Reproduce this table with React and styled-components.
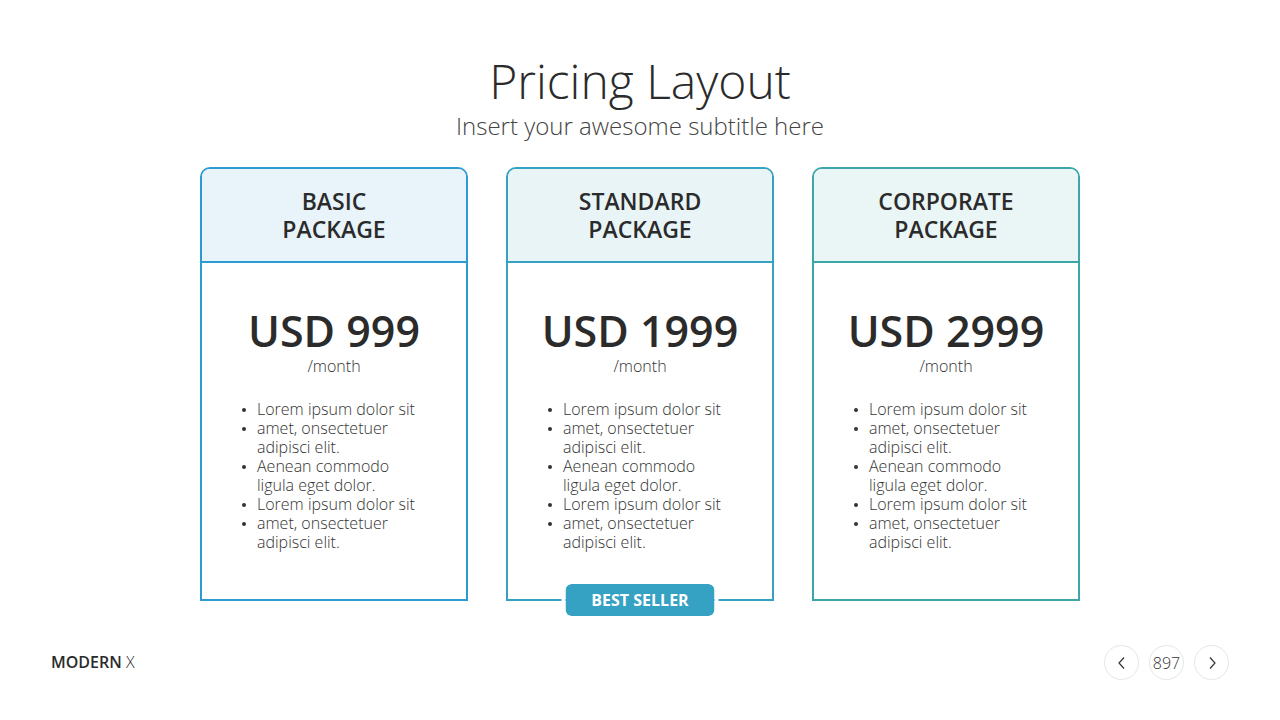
import React from "react";
import styled, { createGlobalStyle } from "styled-components";

const GlobalStyle = createGlobalStyle`
  html, body {
    margin: 0;
    padding: 0;
    background: #ffffff;
  }
  body {
    font-family: "Open Sans", "Liberation Sans", sans-serif;
    color: #2b2b2b;
  }
`;

const plans = [
  {
    name: ["BASIC", "PACKAGE"],
    price: "USD 999",
    color: "#2d9bd3",
    tint: "#e8f4fa",
  },
  {
    name: ["STANDARD", "PACKAGE"],
    price: "USD 1999",
    color: "#35a1c3",
    tint: "#e8f4f6",
    badge: "BEST SELLER",
  },
  {
    name: ["CORPORATE", "PACKAGE"],
    price: "USD 2999",
    color: "#3ba7a8",
    tint: "#eaf5f5",
  },
];

const features = [
  "Lorem ipsum dolor sit",
  "amet, onsectetuer adipisci elit.",
  "Aenean commodo ligula eget dolor.",
  "Lorem ipsum dolor sit",
  "amet, onsectetuer adipisci elit.",
];

const App = () => {
  return (
    <Page>
      <GlobalStyle />
      <Heading>
        <h1>Pricing Layout</h1>
        <p>Insert your awesome subtitle here</p>
      </Heading>

      <Cards>
        {plans.map((plan) => (
          <Card key={plan.price} $color={plan.color}>
            <CardHead $color={plan.color} $tint={plan.tint}>
              {plan.name[0]}
              <br />
              {plan.name[1]}
            </CardHead>
            <CardBody>
              <Price>{plan.price}</Price>
              <Period>/month</Period>
              <Features>
                {features.map((f, i) => (
                  <li key={i}>{f}</li>
                ))}
              </Features>
            </CardBody>
            {plan.badge && <Badge $color={plan.color}>{plan.badge}</Badge>}
          </Card>
        ))}
      </Cards>

      <Footer>
        <Brand>
          MODERN <span>X</span>
        </Brand>
        <Nav>
          <NavButton aria-label="previous">
            <svg width="14" height="14" viewBox="0 0 14 14" fill="none">
              <path d="M9 1.5 L4 7 L9 12.5" stroke="#333" strokeWidth="1.2" />
            </svg>
          </NavButton>
          <NavButton as="div">897</NavButton>
          <NavButton aria-label="next">
            <svg width="14" height="14" viewBox="0 0 14 14" fill="none">
              <path d="M5 1.5 L10 7 L5 12.5" stroke="#333" strokeWidth="1.2" />
            </svg>
          </NavButton>
        </Nav>
      </Footer>
    </Page>
  );
};

const Page = styled.div`
  width: 1280px;
  height: 720px;
  display: flex;
  flex-direction: column;
  align-items: center;
  box-sizing: border-box;
  padding-top: 51px;
  overflow: hidden;
`;

const Heading = styled.div`
  text-align: center;

  h1 {
    margin: 0;
    font-size: 48px;
    line-height: 60px;
    font-weight: 300;
    color: #2b2b2b;
  }

  p {
    margin: 0;
    font-size: 24px;
    line-height: 30px;
    font-weight: 300;
    color: #444;
  }
`;

const Cards = styled.div`
  display: flex;
  gap: 38px;
  margin-top: 26px;
`;

const Card = styled.div`
  position: relative;
  width: 268px;
  height: 434px;
  box-sizing: border-box;
  border: 2px solid ${(p) => p.$color};
  border-radius: 10px 10px 0 0;
  display: flex;
  flex-direction: column;
`;

const CardHead = styled.div`
  height: 94px;
  box-sizing: border-box;
  border-bottom: 2px solid ${(p) => p.$color};
  background: ${(p) => p.$tint};
  border-radius: 8px 8px 0 0;
  display: flex;
  flex-direction: column;
  justify-content: center;
  align-items: center;
  text-align: center;
  font-size: 23px;
  line-height: 28px;
  font-weight: 600;
  color: #2b2b2b;
`;

const CardBody = styled.div`
  padding-top: 45px;
  display: flex;
  flex-direction: column;
  align-items: center;
`;

const Price = styled.div`
  font-size: 43px;
  line-height: 46px;
  font-weight: 600;
  color: #2b2b2b;
`;

const Period = styled.div`
  margin-top: 1px;
  font-size: 16px;
  line-height: 22px;
  font-weight: 300;
  color: #333;
`;

const Features = styled.ul`
  align-self: flex-start;
  list-style: none;
  margin: 23px 0 0 0;
  padding: 0 0 0 55px;
  width: 165px;
  font-size: 16px;
  line-height: 19px;
  font-weight: 300;
  color: #333;

  li {
    position: relative;
  }
  li::before {
    content: "";
    position: absolute;
    left: -15px;
    top: 8px;
    width: 4px;
    height: 4px;
    border-radius: 50%;
    background: #333;
  }
`;

const Badge = styled.div`
  position: absolute;
  left: 50%;
  bottom: -17px;
  transform: translateX(-50%);
  width: 149px;
  height: 32px;
  box-sizing: border-box;
  background: ${(p) => p.$color};
  border-radius: 6px;
  outline: 4px solid #fff;
  color: #fff;
  font-size: 16px;
  font-weight: 700;
  display: flex;
  align-items: center;
  justify-content: center;
`;

const Footer = styled.div`
  margin-top: auto;
  width: 100%;
  box-sizing: border-box;
  padding: 0 51px 40px 51px;
  display: flex;
  justify-content: space-between;
  align-items: center;
`;

const Brand = styled.div`
  font-size: 16px;
  line-height: 20px;
  margin-top: -2px;
  font-weight: 600;
  color: #2b2b2b;

  span {
    font-weight: 300;
  }
`;

const Nav = styled.div`
  display: flex;
  gap: 10px;
`;

const NavButton = styled.button`
  width: 35px;
  height: 35px;
  box-sizing: border-box;
  border-radius: 50%;
  border: 1px solid #e6e6e6;
  background: #fff;
  padding: 0;
  display: flex;
  align-items: center;
  justify-content: center;
  font-family: "Open Sans", "Liberation Sans", sans-serif;
  font-size: 16px;
  font-weight: 300;
  color: #333;
`;

export default App;
